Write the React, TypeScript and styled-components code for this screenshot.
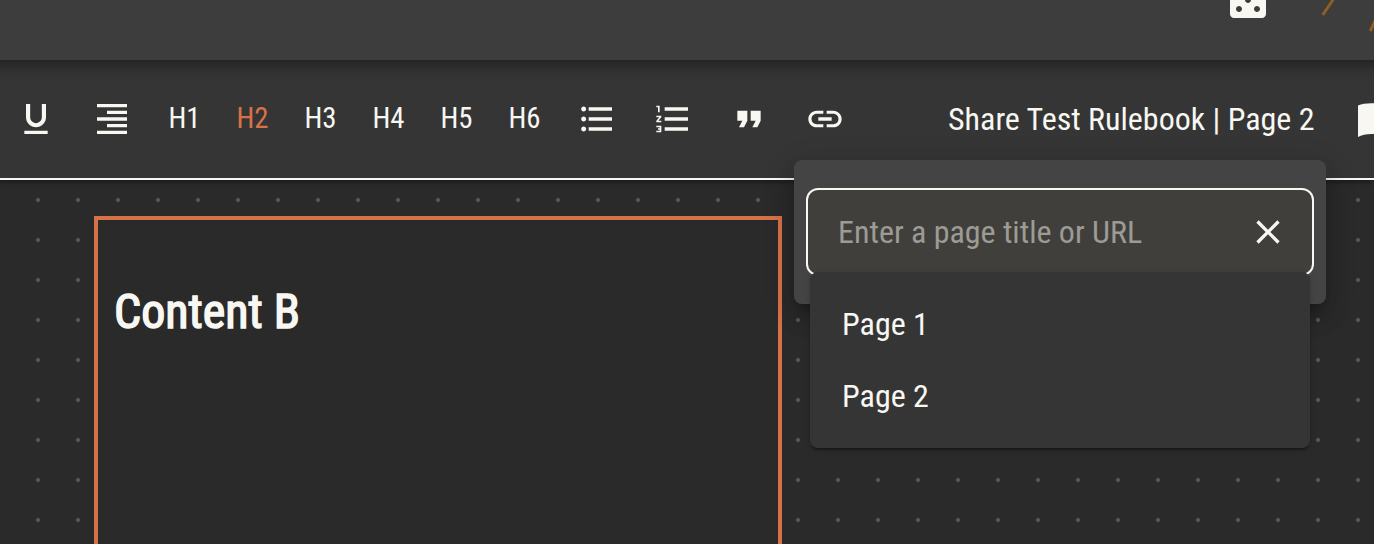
import React from "react";
import styled, { createGlobalStyle } from "styled-components";

const ink = "#f8f7f2";
const accent = "#d77148";

const Global = createGlobalStyle`
  html, body { margin: 0; padding: 0; background: #2a2a2a; }
  body {
    width: 1374px; height: 544px; overflow: hidden; color: ${ink};
    font-family: "Roboto Condensed", Roboto, sans-serif;
    font-stretch: 75%;
  }
`;

const Page = styled.div`
  position: relative;
  display: flex;
  flex-direction: column;
  width: 1374px;
  height: 544px;
  overflow: hidden;
`;

const AppBar = styled.header`
  z-index: 3;
  flex: none;
  display: flex;
  align-items: flex-end;
  justify-content: flex-end;
  box-sizing: border-box;
  height: 60px;
  margin: 0 -40px;
  padding: 0 40px;
  background: #3d3d3d;
  box-shadow: 0 4px 8px -2px rgba(0, 0, 0, 0.2), 0 8px 10px 0 rgba(0, 0, 0, 0.14),
    0 2px 20px 0 rgba(0, 0, 0, 0.12);
`;

const DiceSlot = styled.div`
  display: flex;
  width: 48px;
  height: 48px;
  margin: 0 38px 36px 0;
`;

const LogoSlot = styled.div`
  display: flex;
  width: 64px;
  height: 60px;
`;

const Toolbar = styled.nav`
  z-index: 2;
  flex: none;
  display: flex;
  align-items: center;
  box-sizing: border-box;
  height: 120px;
  margin-left: -2px;
  background: #353535;
  border-bottom: 2px solid ${ink};
  box-shadow: 0 4px 4px -1px rgba(0, 0, 0, 0.3);
`;

const ToolButton = styled.button`
  flex: none;
  display: flex;
  align-items: center;
  justify-content: center;
  width: 76px;
  height: 72px;
  padding: 0;
  border: 0;
  background: none;
  color: ${ink};
  font: inherit;
`;

const HeadingButton = styled(ToolButton)<{ $active: boolean }>`
  width: 68px;
  padding-bottom: 2px;
  color: ${(p) => (p.$active ? accent : ink)};
  font-size: 28.8px;
`;

const HeadingGroup = styled.div`
  display: flex;
  padding: 0 0.5px;
`;

const Title = styled.div`
  margin-left: 85px;
  width: 410px;
  flex: none;
  font-size: 32px;
  line-height: 48px;
  white-space: nowrap;
`;

const Canvas = styled.main`
  flex: 1;
  display: flex;
  padding: 36px 0 0 94px;
  background-color: #2a2a2a;
  background-image: radial-gradient(circle at 20px 20px, #555 1.9px, transparent 2.3px);
  background-size: 40px 40px;
  background-position: 18px 0;
`;

const Block = styled.section`
  box-sizing: border-box;
  width: 688px;
  height: 400px;
  padding: 64px 16px;
  background: #2a2a2a;
  border: 4px solid ${accent};
`;

const Heading = styled.h2`
  margin: 0;
  font-size: 48px;
  line-height: 56px;
  font-weight: 400;
  -webkit-text-stroke: 1.5px ${ink};
`;

const Popover = styled.div`
  position: absolute;
  z-index: 4;
  left: 794px;
  top: 160px;
  box-sizing: border-box;
  width: 532px;
  height: 144px;
  padding: 28px 12px;
  border-radius: 8px;
  background: #444;
  box-shadow: 0 10px 10px -6px rgba(0, 0, 0, 0.2), 0 16px 20px 2px rgba(0, 0, 0, 0.14),
    0 6px 28px 4px rgba(0, 0, 0, 0.12);
`;

const Field = styled.div`
  display: flex;
  align-items: center;
  justify-content: space-between;
  box-sizing: border-box;
  height: 88px;
  padding: 0 24px 0 30px;
  border: 2px solid ${ink};
  border-radius: 12px;
  background: #413f3b;
`;

const Placeholder = styled.span`
  color: #9c9b96;
  font-size: 32px;
  white-space: nowrap;
`;

const Menu = styled.ul`
  position: absolute;
  z-index: 5;
  left: 810px;
  top: 272px;
  box-sizing: border-box;
  width: 500px;
  height: 176px;
  margin: 0;
  padding: 16px 0;
  list-style: none;
  border-radius: 8px;
  background: #353535;
  box-shadow: 0 4px 2px -2px rgba(0, 0, 0, 0.2), 0 2px 2px 0 rgba(0, 0, 0, 0.14),
    0 2px 6px 0 rgba(0, 0, 0, 0.12);
`;

const MenuItem = styled.li`
  display: flex;
  align-items: center;
  height: 72px;
  padding-left: 32px;
  font-size: 32px;
`;

const icons = {
  underline:
    "M12 17c3.31 0 6-2.69 6-6V3h-2.5v8c0 1.93-1.57 3.5-3.5 3.5S8.5 12.93 8.5 11V3H6v8c0 3.31 2.69 6 6 6zm-7 2v2h14v-2H5z",
  alignRight:
    "M3 21h18v-2H3v2zm6-4h12v-2H9v2zm-6-4h18v-2H3v2zm6-4h12V7H9v2zM3 3v2h18V3H3z",
  bulleted:
    "M4 10.5c-.83 0-1.5.67-1.5 1.5s.67 1.5 1.5 1.5 1.5-.67 1.5-1.5-.67-1.5-1.5-1.5zm0-6c-.83 0-1.5.67-1.5 1.5S3.17 7.5 4 7.5 5.5 6.83 5.5 6 4.83 4.5 4 4.5zm0 12c-.83 0-1.5.68-1.5 1.5s.68 1.5 1.5 1.5 1.5-.68 1.5-1.5-.67-1.5-1.5-1.5zM7 19h14v-2H7v2zm0-6h14v-2H7v2zm0-8v2h14V5H7z",
  numbered:
    "M2 17h2v.5H3v1h1v.5H2v1h3v-4H2v1zm1-9h1V4H2v1h1v3zm-1 3h1.8L2 13.1v.9h3v-1H3.2L5 10.9V10H2v1zm5-6v2h14V5H7zm0 14h14v-2H7v2zm0-6h14v-2H7v2z",
  quote: "M6 17h3l2-4V7H5v6h3zm8 0h3l2-4V7h-6v6h3z",
  link: "M3.9 12c0-1.71 1.39-3.1 3.1-3.1h4V7H7c-2.76 0-5 2.24-5 5s2.24 5 5 5h4v-1.9H7c-1.71 0-3.1-1.39-3.1-3.1zM8 13h8v-2H8v2zm9-6h-4v1.9h4c1.71 0 3.1 1.39 3.1 3.1s-1.39 3.1-3.1 3.1h-4V17h4c2.76 0 5-2.24 5-5s-2.24-5-5-5z",
  close:
    "M19 6.41L17.59 5 12 10.59 6.41 5 5 6.41 10.59 12 5 17.59 6.41 19 12 13.41 17.59 19 19 17.59 13.41 12z",
  casino:
    "M19 3H5c-1.1 0-2 .9-2 2v14c0 1.1.9 2 2 2h14c1.1 0 2-.9 2-2V5c0-1.1-.9-2-2-2zM7.5 18c-.83 0-1.5-.67-1.5-1.5S6.67 15 7.5 15s1.5.67 1.5 1.5S8.33 18 7.5 18zm0-9C6.67 9 6 8.33 6 7.5S6.67 6 7.5 6 9 6.67 9 7.5 8.33 9 7.5 9zm4.5 4.5c-.83 0-1.5-.67-1.5-1.5s.67-1.5 1.5-1.5 1.5.67 1.5 1.5-.67 1.5-1.5 1.5zm4.5 4.5c-.83 0-1.5-.67-1.5-1.5s.67-1.5 1.5-1.5 1.5.67 1.5 1.5-.67 1.5-1.5 1.5zm0-9c-.83 0-1.5-.67-1.5-1.5S15.67 6 16.5 6s1.5.67 1.5 1.5S17.33 9 16.5 9z",
};

const Icon = ({ name, size = 40 }: { name: keyof typeof icons; size?: number }) => (
  <svg width={size} height={size} viewBox="0 0 24 24" fill="currentColor">
    <path d={icons[name]} />
  </svg>
);

export default function App() {
  return (
    <>
      <Global />
      <Page>
        <AppBar>
          <DiceSlot>
            <Icon name="casino" size={48} />
          </DiceSlot>
          <LogoSlot>
            <svg width="64" height="60" fill="none" stroke="#8f5e22" strokeWidth="3">
              <path d="M12.7 15 L24.2 -2 M60.3 31 L66 19" />
            </svg>
          </LogoSlot>
        </AppBar>
        <Toolbar>
          <ToolButton><Icon name="underline" /></ToolButton>
          <ToolButton><Icon name="alignRight" /></ToolButton>
          <HeadingGroup>
            {[1, 2, 3, 4, 5, 6].map((n) => (
              <HeadingButton key={n} $active={n === 2}>H{n}</HeadingButton>
            ))}
          </HeadingGroup>
          <ToolButton><Icon name="bulleted" /></ToolButton>
          <ToolButton><Icon name="numbered" /></ToolButton>
          <ToolButton><Icon name="quote" /></ToolButton>
          <ToolButton><Icon name="link" /></ToolButton>
          <Title>Share Test Rulebook | Page 2</Title>
          <svg width="16" height="40" fill={ink}>
            <path d="M0 6.5 Q6 3.8 16 4.2 V35 Q6 34.5 0 38 Z" />
          </svg>
        </Toolbar>
        <Canvas>
          <Block>
            <Heading>Content B</Heading>
          </Block>
        </Canvas>
        <Popover>
          <Field>
            <Placeholder>Enter a page title or URL</Placeholder>
            <Icon name="close" />
          </Field>
        </Popover>
        <Menu>
          <MenuItem>Page 1</MenuItem>
          <MenuItem>Page 2</MenuItem>
        </Menu>
      </Page>
    </>
  );
}
